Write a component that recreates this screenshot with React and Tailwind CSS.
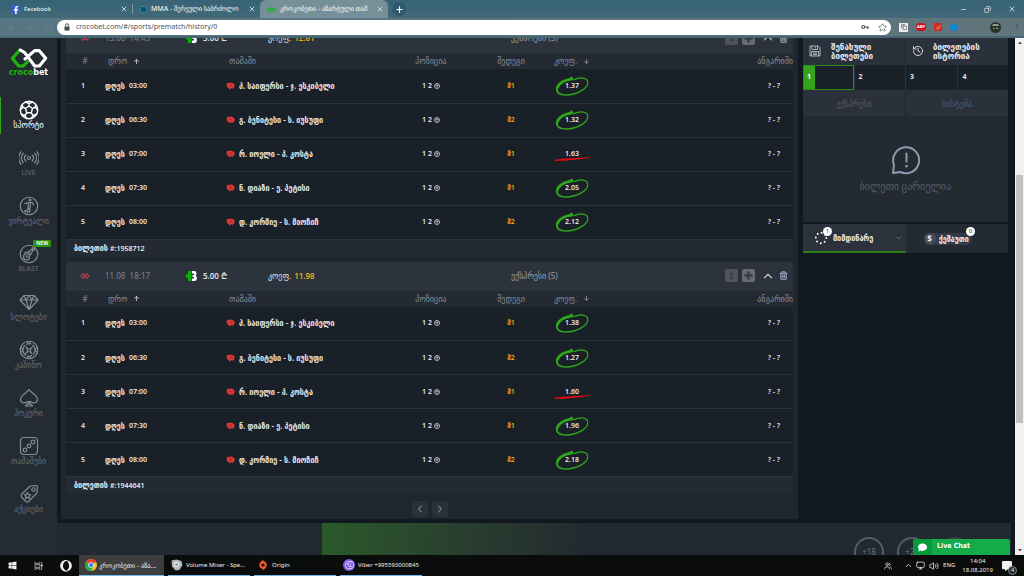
import React from "react";
import {
  ArrowLeft, ArrowRight, RotateCw, Lock, X, Plus, Minus, Copy, Key, Star, MoreVertical,
  ArrowUp, ArrowDown, ChevronUp, ChevronDown, ChevronLeft, ChevronRight, Save, History,
  Trash2, Monitor, Volume2, Users,
} from "lucide-react";
import { FaWindows, FaFacebookF, FaViber, FaComment, FaCommentAlt, FaOpera } from "react-icons/fa";

const UI = "font-['Noto_Sans','DejaVu_Sans_Condensed','DejaVu_Sans',sans-serif]";
const WIDE = "font-['Noto_Sans','DejaVu_Sans',sans-serif]";

/* ---------- browser chrome ---------- */

function ChromeTab({ icon, title, size, width, active }) {
  return (
    <div className={`flex h-full items-center gap-[4px] rounded-t-md pl-[7px] pr-1 text-white ${width} ${active ? "bg-[#76909a]" : ""}`}>
      {icon}
      <span className={`min-w-0 flex-1 overflow-hidden whitespace-nowrap leading-[10px] ${size}`}>{title}</span>
      <button aria-label="Close tab" className="text-[#dfe8eb]"><X size={8} strokeWidth={2.5} /></button>
    </div>
  );
}

function MiniInfinity() {
  return (
    <svg className="shrink-0" width="9" height="5" viewBox="0 0 20 10" fill="none" strokeWidth="2.600" stroke="#1fae2e">
      <path d="M10 5 6.500 8.200a3 3 0 0 1-2.500 0L1.800 6a1.500 1.500 0 0 1 0-2L4 1.800a3 3 0 0 1 2.500 0Z" />
      <path d="M10 5l3.500 3.200a3 3 0 0 0 2.500 0L18.200 6a1.500 1.500 0 0 0 0-2L16 1.800a3 3 0 0 0-2.500 0Z" />
    </svg>
  );
}

function BrowserBar() {
  return (
    <header className={`shrink-0 ${UI}`}>
      <div className="flex h-[18px] items-center bg-linear-to-b from-[#376374] to-[#41697a]">
        <div className="flex h-full w-[132px] items-center pl-1">
          <ChromeTab width="w-full" size="text-[6px]" title="Facebook"
            icon={<span className="flex size-[9px] shrink-0 items-end justify-center rounded-[1px] bg-[#3b5cc4] text-white"><FaFacebookF size={8} /></span>} />
        </div>
        <span className="h-[10px] w-px bg-[#7e9aa5]" />
        <ChromeTab width="w-[127px]" size="text-[7px]" title="MMA - შერეული საბრძოლო"
          icon={<span className="size-[7px] shrink-0 rounded-[2px] border border-[#2b86ad] bg-[#1d4d66]" />} />
        <ChromeTab active width="w-[128px]" size="text-[7px]" title="კროკობეთი - აზარტული თამ" icon={<MiniInfinity />} />
        <button aria-label="New tab" className="ml-1 flex size-[14px] items-center justify-center rounded-full bg-[#31586a] text-white"><Plus size={9} strokeWidth={3} /></button>
        <div className="ml-auto flex items-center gap-[17px] pr-[8px] text-white">
          <button aria-label="Minimize"><Minus size={7} /></button>
          <button aria-label="Restore"><Copy size={7} className="-scale-x-100" /></button>
          <button aria-label="Close"><X size={8} /></button>
        </div>
      </div>
      <div className="flex h-5 items-center border-b-2 border-[#466772] bg-linear-to-r from-[#587682] to-[#60757c]">
        <div className="flex w-[57px] items-center gap-[10px] pl-[7px] text-[#6d858d]">
          <button aria-label="Back"><ArrowLeft size={9} /></button>
          <button aria-label="Forward"><ArrowRight size={9} /></button>
          <button aria-label="Reload"><RotateCw size={8} /></button>
        </div>
        <div className="flex h-[15px] flex-1 items-center rounded-full bg-white pl-[7px] pr-1">
          <svg className="mr-[6px]" width="6" height="8" viewBox="0 0 12 16"><path d="M1 7h10v8H1z" fill="#45494d" /><path d="M3 7V4.500a3 3 0 0 1 6 0V7" fill="none" stroke="#45494d" strokeWidth="1.800" /></svg>
          <input aria-label="Address" defaultValue="crocobet.com/#/sports/prematch/history/0" className="min-w-0 flex-1 bg-transparent text-[7px] leading-[12px] text-[#50555a] outline-none" />
          <svg className="mr-[9px]" width="8" height="6" viewBox="0 0 16 12" fill="none" stroke="#50555a"><circle cx="4.500" cy="6" r="3" strokeWidth="2.400" /><path d="M7.500 6H16M13.500 6v4" strokeWidth="2.400" /></svg>
          <Star size={9} className="text-[#5f6368]" />
        </div>
        <div className="flex w-[133px] items-center gap-2 pl-[8px]">
          <span className="flex size-[9px] items-center justify-center bg-[#e9ebec] text-[#333]"><Copy size={6} /></span>
          <span className="flex h-2 w-[10px] items-center justify-center rounded-full bg-[#d00f1c] text-[4px] font-bold leading-[8px] text-white">ABP</span>
          <span className="flex size-2 items-center justify-center bg-[#d22a22] text-[#ffd36a]"><Key size={5} /></span>
          <span className="h-[7px] w-2 rounded-[3px] bg-[#1283cf]" />
          <svg className="ml-[24px]" width="11" height="11" viewBox="0 0 22 22">
            <circle cx="11" cy="11" r="11" fill="#2c3429" />
            <path d="M4 8h14l-2-4H6z" fill="#8fa08a" /><path d="M6 11h10v6H6z" fill="#18222e" />
            <circle cx="8" cy="13" r="1.600" fill="#d6c94e" /><circle cx="14" cy="13" r="1.600" fill="#d9dede" />
          </svg>
          <MoreVertical size={8} className="ml-1 text-[#3f5259]" />
        </div>
      </div>
    </header>
  );
}

/* ---------- left navigation ---------- */

const S = { width: 20, height: 20, viewBox: "0 0 40 40", fill: "none", stroke: "currentColor", strokeWidth: 2.4, strokeLinejoin: "round", strokeLinecap: "round" };

const navIcons = {
  ball: (
    <svg {...S} strokeWidth="2.800"><circle cx="20" cy="20" r="17.500" /><path d="M20 12l7 5-2.500 8.500h-9L13 17zM20 12V7M27 17l6-3M24.500 25.500l4 6M15.500 25.500l-4 6M13 17l-6-3M20 7l-7-3M20 7l7-3M33 14v-5M33 14l4 6M7 14V9M7 14l-4 6M28.500 31.500l6-3M28.500 31.500L24 37M11.500 31.500L16 37M11.500 31.500l-6-3" /></svg>
  ),
  live: (
    <svg {...S}><circle cx="20" cy="20" r="3" /><path d="M13.500 26a9 9 0 0 1 0-12M26.500 14a9 9 0 0 1 0 12M8.500 29.500a14.500 14.500 0 0 1 0-19M31.500 10.500a14.500 14.500 0 0 1 0 19M4 32.500a20 20 0 0 1 0-25M36 7.500a20 20 0 0 1 0 25" /></svg>
  ),
  virtual: (
    <svg {...S}><circle cx="20" cy="20" r="17.500" /><circle cx="22" cy="8" r="2" /><path d="M11 15l9-2h7l2 5M19 14l-1 10-1 10M23 14l-1 10-5 3M22 24l-1 9" /><circle cx="13" cy="30" r="1.500" /></svg>
  ),
  blast: (
    <svg {...S}><circle cx="20" cy="20" r="17.500" /><circle cx="15" cy="26" r="6" /><path d="M11 18c4-3 10-2 12 4M18 17l8-7M24 20l4-8M27 7v5h5M28 12l4-4M15 23v3h3" /></svg>
  ),
  slots: (
    <svg {...S}><path d="M10 7h20l8 9-18 19L2 16zM2 16h36M10 7l4 9 6 19 6-19 4-9M14 16l6-9 6 9" /></svg>
  ),
  casino: (
    <svg {...S}><circle cx="20" cy="20" r="17.500" /><circle cx="20" cy="20" r="12.500" strokeDasharray="9 4.100" /><path d="M17 17l6 1v6l-6-1zM17 17l-3-3M23 18l4-4M23 24l3 3M17 23l-4 4M17 3l1 4h4l1-4M17 37l1-4h4l1 4M4 16l4 2v4l-4 2M36 16l-4 2v4l4 2" /></svg>
  ),
  poker: (
    <svg {...S}><path d="M20 3C17 9 3 14 3 23c0 7 9 9 14 4h6c5 5 14 3 14-4C37 14 23 9 20 3zM20 28l-3 4h6zM13 36h14l-4-4h-6z" /></svg>
  ),
  games: (
    <svg {...S}><rect x="3" y="3" width="34" height="34" rx="7" /><circle cx="12" cy="28" r="3.600" /><circle cx="20" cy="20" r="3.600" /><circle cx="28" cy="12" r="3.600" /></svg>
  ),
  promo: (
    <svg {...S}><path d="M22 4l12-1a3 3 0 0 1 3 3l-1 12-17 17a4 4 0 0 1-5 0L5 26a4 4 0 0 1 0-5z" /><circle cx="29" cy="11" r="3.500" /><path d="M17 17l2 4 4 .500-3 3 1 4.500-4-2-4 2 1-4.500-3-3 4-.500z" /></svg>
  ),
};

const navItems = [
  ["ball", "სპორტი"], ["live", "LIVE"], ["virtual", "ვირტუალი"], ["blast", "BLAST"], ["slots", "სლოტები"],
  ["casino", "კაზინო"], ["poker", "პოკერი"], ["games", "თამაშები"], ["promo", "აქციები"],
];

function SideNav() {
  return (
    <nav className="flex w-[57px] shrink-0 flex-col bg-[#242b33]">
      <a href="#home" aria-label="crocobet" className="flex h-[59px] flex-col items-center pt-[10px]">
        <svg width="38" height="21" viewBox="0 0 114 63" fill="none" strokeWidth="9.500" strokeLinejoin="round" strokeLinecap="round">
          <path d="M28 8L7 31l19 23h14l12-12" stroke="#1fb40c" />
          <path d="M31 6l13 8 30 40h14l19-23L88 8H74L45 33" stroke="#fff" />
        </svg>
        <span className="font-['DejaVu_Sans',sans-serif] text-[8px] font-bold leading-[8px] text-[#1fb40c]">croco<span className="text-white">bet</span></span>
      </a>
      {navItems.map(([icon, label], i) => (
        <a key={icon} href={"#" + icon} className={`relative flex h-12 flex-col items-center pt-[3px] ${i === 0 ? "text-white" : "text-[#848b95]"}`}>
          {i === 0 && <span className="absolute left-0 top-0 h-[37px] w-px bg-[#30a51c]" />}
          {navIcons[icon]}
          <span className={`whitespace-nowrap leading-[10px] ${WIDE} ${icon === "live" || icon === "blast" ? "text-[7px]" : "text-[8px]"} ${i === 0 ? "font-medium" : "text-[#656d77]"}`}>{label}</span>
          {icon === "blast" && <span className="absolute right-[6px] top-[-1px] rounded-[1px] bg-[#2d9411] px-[3px] text-[5px] font-bold leading-[7px] text-white">NEW</span>}
        </a>
      ))}
    </nav>
  );
}

/* ---------- tickets ---------- */

const games = [
  { time: "03:00", name: "ჰ. საიფერსი - ჯ. ესკიბელი", pick: "მ1" },
  { time: "06:30", name: "გ. ბენიტესი - ს. იუსუფი", pick: "მ2" },
  { time: "07:00", name: "რ. იოელი - პ. კოსტა", pick: "მ1", lost: true },
  { time: "07:30", name: "ნ. დიაზი - ე. პეტისი", pick: "მ1" },
  { time: "08:00", name: "დ. კორმიე - ს. მიოჩიჩ", pick: "მ2" },
];

function Glove() {
  return (
    <svg width="9" height="8" viewBox="0 0 18 16">
      <path d="M1 5c0-3 4-4 6-3 2-2 6-1 7 1 3 0 4 3 3 6l-3 5-3-2-3 3-3-3C3 12 1 9 1 5z" fill="#d63a36" />
      <path d="M6 6l3 2M11 5l1 4" stroke="#8d1f22" strokeWidth="1.400" />
    </svg>
  );
}

function WinMark() {
  return (
    <svg className="absolute left-1/2 top-1/2 -translate-x-1/2 -translate-y-1/2" width="33" height="20" viewBox="0 0 99 60" fill="none" stroke="#2ea81a" strokeLinecap="round">
      <path d="M55 11C75 2 97 4 97 20 97 38 62 57 32 57 14 57 3 50 3 38" strokeWidth="4" />
      <path d="M4 40C5 26 21 13 50 7" strokeWidth="7" />
      <path d="M8 34C14 22 28 14 50 11L47 3M5 44c2 6 8 10 16 12" strokeWidth="4" />
    </svg>
  );
}

function LossMark() {
  return (
    <svg className="absolute left-1/2 top-[8px] -translate-x-1/2" width="36" height="4" viewBox="0 0 108 12">
      <path d="M1 9C30 3 75 4 107 0 108 2 106 3 100 4 70 8 30 12 4 12z" fill="#e80a12" />
    </svg>
  );
}

function TicketHeader({ date, coef }) {
  return (
    <div className="flex h-[29px] shrink-0 items-center bg-[#2c333d] pb-px text-[8px] leading-[12px]">
      <div className="w-[39px] pl-[14px]">
        <svg width="10" height="8" viewBox="0 0 20 16" fill="none" strokeWidth="2">
          <path d="M6 4L1 8l5 4M14 4l5 4-5 4" stroke="#6b6f78" /><path d="M5 3l10 10M15 3L5 13" stroke="#d8353a" strokeWidth="2.600" />
        </svg>
      </div>
      <time className="w-[81px] whitespace-pre text-[#7d848f]">{date}</time>
      <div className="flex w-[82px] items-center gap-[6px] font-semibold text-[#dfe2e6]">
        <svg width="11" height="10" viewBox="0 0 22 20"><path d="M4 0h7v20H4v-7H0V7h4z" fill="#0fae0b" /><path d="M12 0h5c5 0 5 7 2 9 4 2 4 11-2 11h-5v-5h4v-3h-3V8h3V5h-4z" fill="#fff" /></svg>
        5.00 ₾
      </div>
      <div className={`flex w-[243px] gap-[3px] text-[#dfe2e6] ${WIDE}`}><span>კოეფ.</span><span className="font-semibold text-[#e3b01b]">{coef}</span></div>
      <div className={`flex-1 text-[#9aa1ab] ${WIDE}`}>ექსპრესი (5)</div>
      <div className="flex items-center pr-[5px]">
        <button aria-label="Cash out" className="mr-1 flex size-[13px] items-center justify-center rounded-[2px] bg-[#4f545c] font-semibold text-[#353b44]">$</button>
        <button aria-label="Expand" className="mr-[6px] flex size-[13px] items-center justify-center rounded-[2px] bg-[#666b73] text-[#353b44]"><Plus size={11} strokeWidth={5} /></button>
        <button aria-label="Collapse" className="mr-1 text-[#b4bac4]"><ChevronUp size={14} strokeWidth={2.200} /></button>
        <button aria-label="Delete" className="text-[#a3aec4]"><Trash2 size={9} strokeWidth={3} /></button>
      </div>
    </div>
  );
}

function TicketBody({ coefs, number }) {
  return (
    <>
      <table className="w-full table-fixed text-[7px] leading-[10px]">
        <colgroup>
          <col className="w-[34px]" /><col className="w-[120px]" /><col className="w-[160px]" /><col className="w-[102px]" />
          <col className="w-[58px]" /><col className="w-[64px]" /><col />
        </colgroup>
        <thead className={`bg-[#242a34] text-[8px] text-[#858c97] ${WIDE}`}>
          <tr className="h-4 whitespace-nowrap *:p-0 *:font-normal">
            <th scope="col"><span className="pl-[4px]">#</span></th>
            <th scope="col"><span className="flex items-center gap-[6px] pl-[8px]">დრო <ArrowUp size={7} strokeWidth={3} className="text-[#c9ced6]" /></span></th>
            <th scope="col" className="text-left"><span className="pl-[9px]">თამაში</span></th>
            <th scope="col">პოზიცია</th>
            <th scope="col">შედეგი</th>
            <th scope="col"><span className="flex items-center justify-center gap-[6px]">კოეფ. <ArrowDown size={7} strokeWidth={3} /></span></th>
            <th scope="col" className="text-right">ანგარიში</th>
          </tr>
        </thead>
        <tbody className="bg-[#1a2027] font-semibold text-[#e4e6e9]">
          {games.map((g, i) => (
            <tr key={i} className="h-[34px] whitespace-nowrap border-b border-[#2c333c] *:p-0">
              <td className="text-center">{i + 1}</td>
              <td><span className="flex gap-[4px] pl-[5px]"><span className="text-[8px]">დღეს</span><span>{g.time}</span></span></td>
              <td><span className="flex items-center gap-[4px] pl-[6px] text-[8px]"><Glove />{g.name}</span></td>
              <td>
                <span className="flex items-center justify-center gap-[2px]">
                  <span>1</span><span>2</span>
                  <svg width="6" height="6" viewBox="0 0 12 12" fill="none" stroke="currentColor" strokeWidth="1.500"><circle cx="6" cy="6" r="5" /><path d="M3 4.500h6M6 4.500V9" /></svg>
                </span>
              </td>
              <td className="text-center text-[#e8a613]">{g.pick}</td>
              <td className="text-center"><span className="relative inline-block">{g.lost ? <LossMark /> : <WinMark />}<span className="relative">{coefs[i]}</span></span></td>
              <td className="text-right"><span className="pr-[13px]">? - ?</span></td>
            </tr>
          ))}
        </tbody>
      </table>
      <div className="flex h-[17px] items-baseline bg-[#242a34] pl-2 text-[7px] font-semibold leading-[16px] text-[#e8eaed]"><span className="text-[8px]">ბილეთის</span><span className="pl-[2px]">#:{number}</span></div>
    </>
  );
}

function Tickets() {
  return (
    <main className="flex min-w-0 flex-1 flex-col border-l-4 border-[#111820] bg-[#1f262e] px-[5px]">
      <section>
        <div className="flex h-[15px] flex-col justify-end overflow-hidden"><TicketHeader date="13.08  14:45" coef="12.81" /></div>
        <TicketBody coefs={["1.37", "1.32", "1.63", "2.05", "2.12"]} number="1958712" />
      </section>
      <section className="mt-[5px]">
        <TicketHeader date="11.08  18:17" coef="11.98" />
        <TicketBody coefs={["1.38", "1.27", "1.60", "1.96", "2.18"]} number="1944641" />
      </section>
      <div className="flex justify-center gap-1 pb-[2px] pt-[7px] text-[#a0a7b0]">
        <button aria-label="Previous page" className="flex size-4 items-center justify-center rounded-[2px] bg-[#2a313b]"><ChevronLeft size={12} /></button>
        <button aria-label="Next page" className="flex size-4 items-center justify-center rounded-[2px] bg-[#2a313b]"><ChevronRight size={12} /></button>
      </div>
    </main>
  );
}

/* ---------- bet slip ---------- */

function DiskIcon() {
  return (
    <svg className="shrink-0" width="12" height="12" viewBox="0 0 24 24" fill="none" stroke="#b9c0ca" strokeWidth="1.800">
      <path d="M2 2h17l3 3v17H2zM6 2v7h11V2M13 4v3M5 22v-9h14v9M8 16h8M8 19h8" />
    </svg>
  );
}

function BetSlip() {
  return (
    <aside className="mx-[5px] mr-[3px] w-[205px] shrink-0">
      <div className={`grid grid-cols-2 gap-px bg-[#1d242c] text-[8px] font-bold leading-[9px] text-[#e6e9ed] ${WIDE}`}>
        <button className="flex h-[26px] items-center gap-[10px] bg-[#2a313b] pl-[6px] text-left"><DiskIcon /><span>შენახული<br />ბილეთები</span></button>
        <button className="flex h-[26px] items-center gap-[9px] bg-[#2a313b] pl-[6px] text-left"><History size={12} strokeWidth={2} className="shrink-0 text-[#d4d8de]" /><span>ბილეთების<br />ისტორია</span></button>
      </div>
      <div className="grid h-[27px] grid-cols-4 gap-px bg-[#2c333d] py-px text-[7px] font-bold text-[#e4e6e9]">
        <button className="flex items-stretch border border-[#2c8a17] bg-[#1b2128] text-left"><span className="flex w-[11px] items-center justify-center bg-[#35a41d] pr-px text-white">1</span></button>
        <button className="bg-[#1b2128] pl-[4px] text-left">2</button>
        <button className="bg-[#1b2128] pl-[4px] text-left">3</button>
        <button className="bg-[#1b2128] pl-[5px] text-left">4</button>
      </div>
      <div className={`grid h-[25px] grid-cols-2 gap-px bg-[#1d242c] text-[8px] text-[#555d68] ${WIDE}`}>
        <button className="bg-[#2a313b]">ექსპრესი</button>
        <button className="bg-[#2a313b]">სისტემა</button>
      </div>
      <div className={`flex h-[106px] flex-col items-center gap-[5px] bg-[#232a32] pt-[29px] text-[10px] leading-[13px] text-[#565e69] ${WIDE}`}>
        <svg width="30" height="30" viewBox="0 0 60 60" fill="none" stroke="#8d99ad" strokeWidth="4" strokeLinejoin="round" strokeLinecap="round">
          <path d="M4 56l2-16A26 26 0 1 1 19 54z" /><path d="M31 17v16" /><path d="M31 42v.500" strokeWidth="5" />
        </svg>
        <p>ბილეთი ცარიელია</p>
      </div>
      <div className="mt-[2px] grid h-[29px] grid-cols-2 bg-[#232a32] text-[8px] font-bold text-[#eceef1]">
        <button className="flex items-center border-b-2 border-[#2a7d15] bg-[#2b323c] pl-[11px] pr-[3px]">
          <span className="relative mr-[5px]">
            <svg width="14" height="14" viewBox="0 0 28 28" fill="none"><circle cx="14" cy="14" r="10.500" stroke="#fff" strokeWidth="3.800" strokeLinecap="round" strokeDasharray="0.100 8.150" /></svg>
            <span className="absolute -right-[4px] -top-[4px] flex size-[9px] items-center justify-center rounded-full bg-white text-[6px] font-normal leading-[9px] text-[#222]">1</span>
          </span>
          <span className="flex-1 text-left">მიმდინარე</span>
          <ChevronDown size={8} className="text-[#868d98]" />
        </button>
        <button className="flex items-center justify-center pr-[18px]">
          <span className="relative flex h-3 items-center gap-[3px] rounded-full bg-[#343b46] pr-[3px]">
            <span className="flex size-3 items-center justify-center rounded-full bg-[#454c57]">$</span>ქეშაუთი
            <span className="absolute -right-[3px] -top-[6px] flex size-[9px] items-center justify-center rounded-full bg-white text-[6px] font-normal leading-[9px] text-[#222]">0</span>
          </span>
        </button>
      </div>
    </aside>
  );
}

/* ---------- footer strip, scrollbar, taskbar ---------- */

function SiteFooter() {
  return (
    <footer className="relative mr-1 mt-1 flex min-h-0 flex-1 overflow-hidden bg-[#232930]">
      <div className="ml-[265px] flex-1 bg-linear-[100deg] from-[#2b5a2b] via-[#29402f] via-25% to-[#232930] to-50%" />
      <div className="flex gap-[13px] pr-[41px] pt-[14px] text-[8px] text-[#6b727c]">
        <span className="flex size-[30px] items-center justify-center rounded-full border-2 border-[#565d68]">+18</span>
        <span className="flex size-[30px] items-center justify-center rounded-full border-2 border-[#565d68]">+21</span>
        <span className="size-[30px] rounded-full bg-[#3a4049]" />
      </div>
      <button className="absolute bottom-0 right-px flex h-4 w-[97px] items-stretch overflow-hidden rounded-t-[2px] bg-[#15ab4b] text-white">
        <span className="flex w-[19px] items-center justify-center bg-[#079a3c]"><FaComment size={9} /></span>
        <span className="pl-[5px] font-['DejaVu_Sans_Condensed','DejaVu_Sans',sans-serif] text-[7px] font-bold leading-[15px]">Live Chat</span>
      </button>
    </footer>
  );
}

function Scrollbar() {
  return (
    <div className="flex w-[9px] shrink-0 flex-col items-center bg-[#f1f1f1] py-[3px] text-[#505050]" aria-hidden="true">
      <svg width="4" height="3" viewBox="0 0 8 6"><path d="M0 6l4-5 4 5z" fill="currentColor" /></svg>
      <div className="mt-[131px] h-[248px] w-[7px] bg-[#c1c1c1]" />
      <svg className="mt-auto" width="4" height="3" viewBox="0 0 8 6"><path d="M0 0l4 5 4-5z" fill="currentColor" /></svg>
    </div>
  );
}

function ChromeLogo() {
  return (
    <svg className="shrink-0" width="12" height="12" viewBox="0 0 24 24">
      <circle cx="12" cy="12" r="12" fill="#f5c52c" />
      <path d="M12 12L1.600 6A12 12 0 0 1 22.400 6z" fill="#e2402f" /><path d="M1.600 6A12 12 0 0 0 12 24l5-9-5-3z" fill="#2ba24c" />
      <circle cx="12" cy="12" r="5.600" fill="#fff" /><circle cx="12" cy="12" r="4.400" fill="#4285f4" />
    </svg>
  );
}

function TaskItem({ icon, label, active }) {
  return (
    <button className={`flex h-full shrink-0 items-center border-b border-[#76b9ed] ${active ? "w-[85px] gap-[2px] bg-[#3d3d3d] pl-[6px] text-[7px]" : "w-[82px] gap-[3px] pl-[3px]"}`}>
      {icon}<span className="whitespace-nowrap">{label}</span>
    </button>
  );
}

function Taskbar() {
  return (
    <footer className={`flex h-[21px] shrink-0 items-center bg-[#0b0c0c] text-[6px] leading-[9px] text-[#f0f0f0] ${UI}`}>
      <div className="flex w-[79px] items-center gap-[17px] pl-2">
        <button aria-label="Start"><FaWindows size={9} /></button>
        <button aria-label="Task view">
          <svg width="9" height="10" viewBox="0 0 20 20" fill="none" stroke="#d0d0d0" strokeWidth="1.600"><path d="M2 1v3h11V1M2 19v-3h11v3M2 7h11v6H2zM17 1v4M17 9v10" /><path d="M16 7h2.500v3H16z" fill="#fff" /></svg>
        </button>
        <button aria-label="Opera"><FaOpera size={12} /></button>
      </div>
      <div className="flex h-full gap-[4px]">
        <TaskItem active icon={<ChromeLogo />} label="კროკობეთი - აზა..." />
        <TaskItem icon={<svg className="shrink-0" width="12" height="12" viewBox="0 0 24 24"><path d="M1 3l10-2 10 3 2 8-6 10-8 1-7-8z" fill="#aeb4b9" /><circle cx="11" cy="11" r="6" fill="#dfe2e4" /><circle cx="11" cy="11" r="2.500" fill="#868d92" /></svg>} label="Volume Mixer - Spe..." />
        <TaskItem icon={<svg className="shrink-0" width="12" height="12" viewBox="0 0 24 24"><path d="M14 1l-2 3a8 8 0 0 1 7 11c-2 4-5 6-9 8l2-3A8 8 0 0 1 5 9c2-4 5-6 9-8z" fill="#f1592a" /><circle cx="12" cy="12" r="3.200" fill="#0b0c0c" /></svg>} label="Origin" />
        <TaskItem icon={<span className="flex size-3 shrink-0 items-center justify-center rounded-full bg-[#7d5bea]"><FaViber size={9} /></span>} label="Viber +995593000845" />
      </div>
      <div className="ml-auto flex items-center pr-[12px]">
        <Users size={8} className="mr-[12px]" />
        <ChevronUp size={9} className="mr-[3px]" />
        <Monitor size={9} className="mr-[4px]" />
        <Volume2 size={10} className="mr-[4px]" />
        <span className="mr-[7px]">ENG</span>
        <div className="mr-[9px] text-center">14:04<br />18.08.2019</div>
        <span className="relative"><FaCommentAlt size={10} /><span className="absolute -bottom-[4px] -right-[5px] flex size-[9px] items-center justify-center rounded-full border border-[#888] bg-[#222] text-[6px] leading-[8px]">4</span></span>
      </div>
    </footer>
  );
}

export default function App() {
  return (
    <div className={`flex h-screen flex-col overflow-hidden bg-[#111820] ${UI}`}>
      <BrowserBar />
      <div className="flex min-h-0 flex-1">
        <SideNav />
        <div className="flex min-w-0 flex-1 flex-col">
          <div className="flex items-start"><Tickets /><BetSlip /><span className="w-1" /></div>
          <SiteFooter />
        </div>
        <Scrollbar />
      </div>
      <Taskbar />
    </div>
  );
}
